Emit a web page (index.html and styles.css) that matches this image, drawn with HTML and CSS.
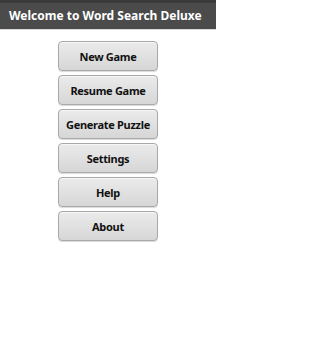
FILE: index.html
```html
<!DOCTYPE html>
<html>
<head>
<meta charset="utf-8">
<link rel="stylesheet" href="styles.css">
</head>
<body>
<div class="screen">
  <div class="titlebar">Welcome to Word Search Deluxe</div>
  <div class="menu">
    <button class="btn">New Game</button>
    <button class="btn">Resume Game</button>
    <button class="btn">Generate Puzzle</button>
    <button class="btn">Settings</button>
    <button class="btn">Help</button>
    <button class="btn">About</button>
  </div>
</div>
</body>
</html>
```
FILE: styles.css
```css
html, body {
  margin: 0;
  padding: 0;
  background: #ffffff;
}
.screen {
  width: 216px;
  height: 360px;
  overflow: hidden;
}
.titlebar {
  height: 26px;
  border-top: 3px solid #3a3a3a;
  background: #4b4b4b;
  color: #ffffff;
  font-family: "Noto Sans", "Open Sans", sans-serif;
  font-weight: 700;
  font-size: 12px;
  line-height: 26px;
  padding-left: 9px;
  white-space: nowrap;
  border-bottom: 1px solid #d8d8d8;
}
.menu {
  display: flex;
  flex-direction: column;
  align-items: center;
  gap: 4px;
  padding-top: 11px;
}
.btn {
  width: 100px;
  height: 30px;
  margin: 0;
  padding: 0;
  border: 1px solid #a9a9a9;
  border-radius: 4px;
  background: linear-gradient(#ebebeb, #d6d6d6);
  box-shadow: inset 0 1px 0 #f6f6f6, 0 1px 1px rgba(0,0,0,0.15);
  color: #111111;
  font-family: "Noto Sans", "Open Sans", sans-serif;
  font-weight: 700;
  font-size: 11px;
  letter-spacing: -0.3px;
}
```
